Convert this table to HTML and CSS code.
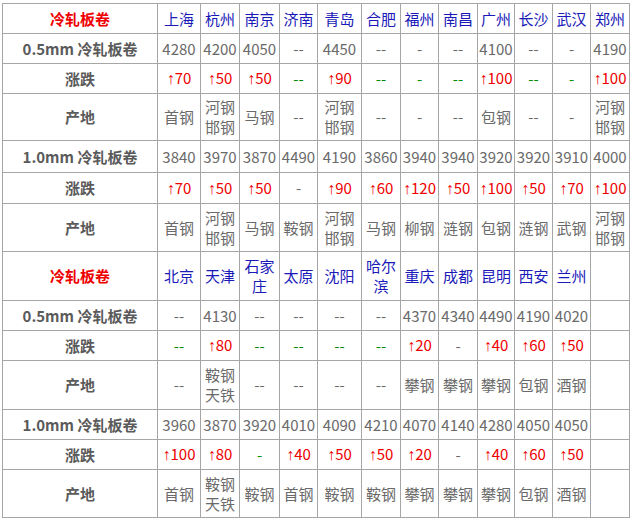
FILE: index.html
```html
<!DOCTYPE html>
<html lang="zh">
<head>
<meta charset="utf-8">
<link rel="stylesheet" href="styles.css">
</head>
<body>
<div class="wrap">
<table class="price">
<colgroup>
<col class="c0"><col class="c1"><col class="c2"><col class="c3"><col class="c4"><col class="c5"><col class="c6"><col class="c7"><col class="c8"><col class="c9"><col class="c10"><col class="c11"><col class="c12">
</colgroup>
<tbody>
<tr class="h30"><td class="title">冷轧板卷</td><td class="city">上海</td><td class="city">杭州</td><td class="city">南京</td><td class="city">济南</td><td class="city">青岛</td><td class="city">合肥</td><td class="city">福州</td><td class="city">南昌</td><td class="city">广州</td><td class="city">长沙</td><td class="city">武汉</td><td class="city">郑州</td></tr>
<tr class="h30"><td class="lab">0.5mm 冷轧板卷</td><td>4280</td><td>4200</td><td>4050</td><td>--</td><td>4450</td><td>--</td><td>-</td><td>--</td><td>4100</td><td>--</td><td>-</td><td>4190</td></tr>
<tr class="h30"><td class="lab">涨跌</td><td class="up"><span class="ar">↑</span>70</td><td class="up"><span class="ar">↑</span>50</td><td class="up"><span class="ar">↑</span>50</td><td class="flat">--</td><td class="up"><span class="ar">↑</span>90</td><td class="flat">--</td><td class="flat">-</td><td class="flat">--</td><td class="up"><span class="ar">↑</span>100</td><td class="flat">--</td><td class="flat">-</td><td class="up"><span class="ar">↑</span>100</td></tr>
<tr class="h47"><td class="lab">产地</td><td>首钢</td><td>河钢<br>邯钢</td><td>马钢</td><td>--</td><td>河钢<br>邯钢</td><td>--</td><td>-</td><td>--</td><td>包钢</td><td>--</td><td>-</td><td>河钢<br>邯钢</td></tr>
<tr class="h32"><td class="lab">1.0mm 冷轧板卷</td><td>3840</td><td>3970</td><td>3870</td><td>4490</td><td>4190</td><td>3860</td><td>3940</td><td>3940</td><td>3920</td><td>3920</td><td>3910</td><td>4000</td></tr>
<tr class="h31"><td class="lab">涨跌</td><td class="up"><span class="ar">↑</span>70</td><td class="up"><span class="ar">↑</span>50</td><td class="up"><span class="ar">↑</span>50</td><td>-</td><td class="up"><span class="ar">↑</span>90</td><td class="up"><span class="ar">↑</span>60</td><td class="up"><span class="ar">↑</span>120</td><td class="up"><span class="ar">↑</span>50</td><td class="up"><span class="ar">↑</span>100</td><td class="up"><span class="ar">↑</span>50</td><td class="up"><span class="ar">↑</span>70</td><td class="up"><span class="ar">↑</span>100</td></tr>
<tr class="h48"><td class="lab">产地</td><td>首钢</td><td>河钢<br>邯钢</td><td>马钢</td><td>鞍钢</td><td>河钢<br>邯钢</td><td>马钢</td><td>柳钢</td><td>涟钢</td><td>包钢</td><td>涟钢</td><td>武钢</td><td>河钢<br>邯钢</td></tr>
<tr class="h49"><td class="title">冷轧板卷</td><td class="city">北京</td><td class="city">天津</td><td class="city">石家<br>庄</td><td class="city">太原</td><td class="city">沈阳</td><td class="city">哈尔<br>滨</td><td class="city">重庆</td><td class="city">成都</td><td class="city">昆明</td><td class="city">西安</td><td class="city">兰州</td><td></td></tr>
<tr class="h30"><td class="lab">0.5mm 冷轧板卷</td><td>--</td><td>4130</td><td>--</td><td>--</td><td>--</td><td>--</td><td>4370</td><td>4340</td><td>4490</td><td>4190</td><td>4020</td><td></td></tr>
<tr class="h30"><td class="lab">涨跌</td><td class="flat">--</td><td class="up"><span class="ar">↑</span>80</td><td class="flat">--</td><td class="flat">--</td><td class="flat">--</td><td class="flat">--</td><td class="up"><span class="ar">↑</span>20</td><td>-</td><td class="up"><span class="ar">↑</span>40</td><td class="up"><span class="ar">↑</span>60</td><td class="up"><span class="ar">↑</span>50</td><td></td></tr>
<tr class="h49"><td class="lab">产地</td><td>--</td><td>鞍钢<br>天铁</td><td>--</td><td>--</td><td>--</td><td>--</td><td>攀钢</td><td>攀钢</td><td>攀钢</td><td>包钢</td><td>酒钢</td><td></td></tr>
<tr class="h30"><td class="lab">1.0mm 冷轧板卷</td><td>3960</td><td>3870</td><td>3920</td><td>4010</td><td>4090</td><td>4210</td><td>4070</td><td>4140</td><td>4280</td><td>4050</td><td>4050</td><td></td></tr>
<tr class="h30"><td class="lab">涨跌</td><td class="up"><span class="ar">↑</span>100</td><td class="up"><span class="ar">↑</span>80</td><td class="flat">-</td><td class="up"><span class="ar">↑</span>40</td><td class="up"><span class="ar">↑</span>50</td><td class="up"><span class="ar">↑</span>50</td><td class="up"><span class="ar">↑</span>20</td><td>-</td><td class="up"><span class="ar">↑</span>40</td><td class="up"><span class="ar">↑</span>60</td><td class="up"><span class="ar">↑</span>50</td><td></td></tr>
<tr class="h48"><td class="lab">产地</td><td>首钢</td><td>鞍钢<br>天铁</td><td>鞍钢</td><td>首钢</td><td>鞍钢</td><td>鞍钢</td><td>攀钢</td><td>攀钢</td><td>攀钢</td><td>包钢</td><td>酒钢</td><td></td></tr>
</tbody>
</table>
</div>
</body>
</html>
```
FILE: styles.css
```css
html, body {
  margin: 0;
  padding: 0;
  background: #ffffff;
}
.wrap {
  padding: 3px 0 0 2px;
}
.price {
  border-collapse: collapse;
  table-layout: fixed;
  width: 628px;
  border: 1px solid #333333;
  font-family: "Noto Sans CJK SC", "Noto Sans", sans-serif;
  font-size: 15px;
  line-height: 20px;
  color: #6a6a6a;
}
.price td {
  border: 1px solid #a6a6a6;
  padding: 0;
  text-align: center;
  vertical-align: middle;
  white-space: nowrap;
  overflow: hidden;
}
.c0 { width: 155px; }
.c1 { width: 43px; }
.c2 { width: 39px; }
.c3 { width: 40px; }
.c4 { width: 38px; }
.c5 { width: 44px; }
.c6 { width: 39px; }
.c7 { width: 38px; }
.c8 { width: 39px; }
.c9 { width: 37px; }
.c10 { width: 38px; }
.c11 { width: 38px; }
.c12 { width: 39px; }
.h30 { height: 30px; }
.h31 { height: 31px; }
.h32 { height: 32px; }
.h47 { height: 47px; }
.h48 { height: 48px; }
.h49 { height: 49px; }
.price td.title {
  color: #ee0000;
  font-weight: bold;
}
.price td.city {
  color: #1a1ab8;
}
.price td.lab {
  font-weight: bold;
  color: #5a5a5a;
}
.price td.up {
  color: #ee0000;
}
.price td.flat {
  color: #008a00;
}
.ar {
  font-family: "Liberation Sans", sans-serif;
  font-size: 16px;
}
```
